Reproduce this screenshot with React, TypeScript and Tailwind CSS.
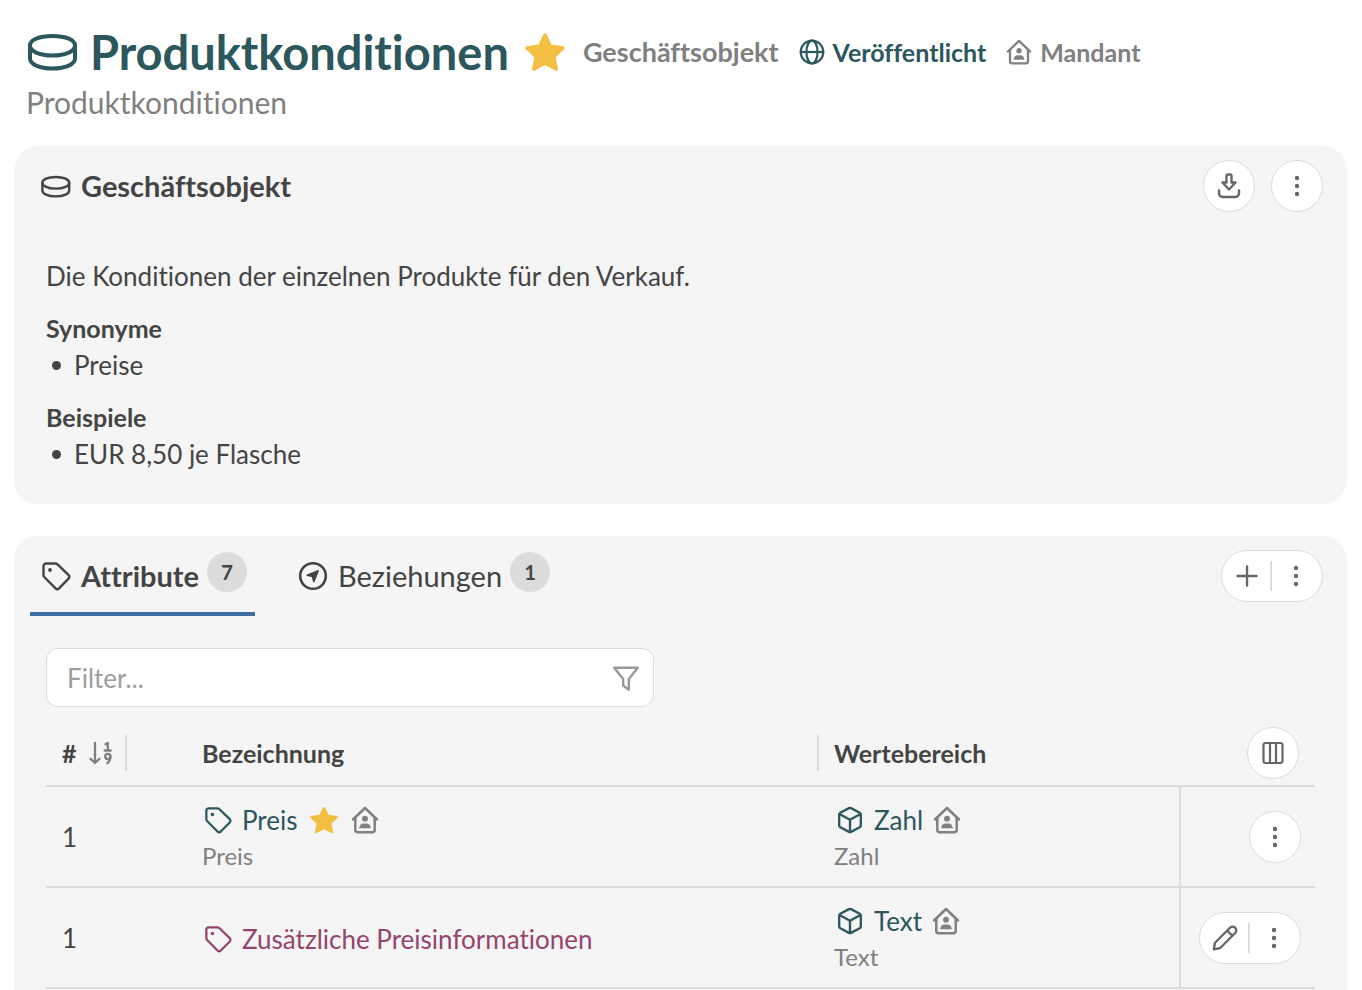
import { ReactNode } from "react";

type IconProps = { className?: string };

interface Reference {
  label: string;
  shared: boolean;
}

interface AttributeRow {
  position: number;
  name: string;
  description?: string;
  isKey: boolean;
  isShared: boolean;
  isDraft: boolean;
  editable: boolean;
  range: Reference;
}

const rows: AttributeRow[] = [
  {
    position: 1,
    name: "Preis",
    description: "Preis",
    isKey: true,
    isShared: true,
    isDraft: false,
    editable: false,
    range: { label: "Zahl", shared: true }
  },
  {
    position: 1,
    name: "Zusätzliche Preisinformationen",
    isKey: false,
    isShared: false,
    isDraft: true,
    editable: true,
    range: { label: "Text", shared: true }
  }
];

const details = [
  { title: "Synonyme", items: ["Preise"] },
  { title: "Beispiele", items: ["EUR 8,50 je Flasche"] }
];

export default function App() {
  return (
    <div className="flex min-h-screen flex-col bg-white pt-6 pr-[15px] pl-[14px] font-['Lato','Noto_Sans',sans-serif] text-[26px] leading-9 text-[#444] [font-variant-ligatures:none]">
      <header className="px-3">
        <div className="flex items-center">
          <DiscIcon className="h-[38px] w-[52px] shrink-0 text-[#2b575d]" />
          <h1 className="ml-3 text-[47px] leading-14 font-bold text-[#2b575d]">Produktkonditionen</h1>
          <StarIcon className="ml-4 h-10 w-10 shrink-0" />
          <span className="ml-[18px] text-[27px] font-bold text-[#808080]">Geschäftsobjekt</span>
          <span className="ml-5 flex items-center gap-2 text-[25px] font-bold text-[#2b575d]">
            <GlobeIcon className="h-[26px] w-[26px]" />
            Veröffentlicht
          </span>
          <span className="ml-5 flex items-center gap-2 text-[25px] font-bold text-[#808080]">
            <HouseIcon className="h-[26px] w-[26px]" />
            Mandant
          </span>
        </div>
        <p className="mt-[2px] text-[30px] leading-10 text-[#808080]">Produktkonditionen</p>
      </header>

      <section className="mt-6 rounded-3xl bg-[#f5f5f5] pb-8">
        <div className="flex h-20 items-center justify-between pr-6 pl-[26px]">
          <h2 className="flex items-center gap-[10px] text-[29px] font-bold">
            <DiscIcon className="h-[23px] w-[31px]" />
            Geschäftsobjekt
          </h2>
          <div className="flex gap-4">
            <RoundButton label="Herunterladen">
              <DownloadIcon className="h-6 w-6" />
            </RoundButton>
            <RoundButton label="Weitere Aktionen">
              <DotsIcon className="h-6 w-6" />
            </RoundButton>
          </div>
        </div>
        <div className="mt-8 px-8">
          <p>Die Konditionen der einzelnen Produkte für den Verkauf.</p>
          {details.map((detail) => (
            <div key={detail.title} className="mt-4">
              <h3 className="text-[25px] leading-9 font-bold">{detail.title}</h3>
              <ul className="pt-px">
                {detail.items.map((item) => (
                  <li key={item} className="flex items-center gap-[13px] pl-[6px]">
                    <span className="h-[9px] w-[9px] rounded-full bg-[#444]" />
                    {item}
                  </li>
                ))}
              </ul>
            </div>
          ))}
        </div>
      </section>

      <section className="mt-8 flex-1 rounded-t-3xl bg-[#f5f5f5]">
        <div className="flex h-20 items-center justify-between pr-6 pl-4">
          <div role="tablist" className="flex gap-8 self-stretch">
            <Tab icon={<TagIcon className="h-[30px] w-[30px]" />} label="Attribute" count={7} active />
            <Tab icon={<CompassIcon className="h-[30px] w-[30px]" />} label="Beziehungen" count={1} />
          </div>
          <ButtonGroup label="Attribut hinzufügen" icon={<PlusIcon className="h-6 w-6" />} />
        </div>

        <div className="px-8 pt-8">
          <div className="flex h-[59px] w-[608px] max-w-full items-center rounded-xl border border-[#dcdcdc] bg-white pr-3 pl-5">
            <input
              aria-label="Filter"
              placeholder="Filter..."
              className="min-w-0 flex-1 bg-transparent outline-none placeholder:text-[#9e9e9e]"
            />
            <FilterIcon className="h-[30px] w-[30px] text-[#999]" />
          </div>

          <table className="mt-[14px] w-full table-fixed text-left">
            <thead>
              <tr className="h-[65px] border-b-2 border-[#dcdcdc] text-[25px]">
                <th className="w-[140px] p-0 font-bold">
                  <span className="flex h-9 w-[81px] items-center gap-3 border-r-2 border-[#dcdcdc] pl-4">
                    #
                    <SortIcon className="h-6 w-6 shrink-0 text-[#808080]" />
                  </span>
                </th>
                <th className="p-0 font-bold">
                  <span className="flex h-9 items-center border-r-2 border-[#dcdcdc] pl-4">Bezeichnung</span>
                </th>
                <th className="w-[361px] p-0 pl-[15px] font-bold">Wertebereich</th>
                <th className="w-[135px] p-0 pr-4">
                  <div className="flex justify-end">
                    <RoundButton label="Spalten">
                      <ColumnsIcon className="h-6 w-6" />
                    </RoundButton>
                  </div>
                </th>
              </tr>
            </thead>
            <tbody>
              {rows.map((row) => (
                <AttributeTableRow key={row.name} row={row} />
              ))}
            </tbody>
          </table>
        </div>
      </section>
    </div>
  );
}

function AttributeTableRow({ row }: { row: AttributeRow }) {
  return (
    <tr className="h-[101px] border-b-2 border-[#dcdcdc]">
      <td className="p-0 pt-px pl-4">{row.position}</td>
      <td className="p-0 pt-[3px] pl-4">
        <div className="flex items-center">
          <a
            href="#"
            className={`flex items-center gap-[10px] pl-[2px] ${row.isDraft ? "text-[#95446d]" : "text-[#2b575d]"}`}
          >
            <TagIcon className="h-7 w-7" />
            {row.name}
          </a>
          {row.isKey ? <StarIcon className="ml-3 h-7 w-7" /> : null}
          {row.isShared ? <HouseIcon className="ml-[13px] h-7 w-7 text-[#808080]" /> : null}
        </div>
        {row.description ? <p className="text-2xl leading-9 text-[#808080]">{row.description}</p> : null}
      </td>
      <td className="border-r-2 border-[#dcdcdc] p-0 pt-[3px] pl-[15px]">
        <div className="flex items-center gap-[10px]">
          <a href="#" className="flex items-center gap-[10px] pl-[2px] text-[#2b575d]">
            <CubeIcon className="h-7 w-7" />
            {row.range.label}
          </a>
          {row.range.shared ? <HouseIcon className="h-7 w-7 text-[#808080]" /> : null}
        </div>
        <p className="text-2xl leading-9 text-[#808080]">{row.range.label}</p>
      </td>
      <td className="p-0 pt-px pr-[14px]">
        <div className="flex justify-end">
          {row.editable ? (
            <ButtonGroup label="Bearbeiten" icon={<PencilIcon className="h-7 w-7" />} />
          ) : (
            <RoundButton label="Weitere Aktionen">
              <DotsIcon className="h-6 w-6" />
            </RoundButton>
          )}
        </div>
      </td>
    </tr>
  );
}

function Tab({ icon, label, count, active }: { icon: ReactNode; label: string; count: number; active?: boolean }) {
  return (
    <button
      type="button"
      role="tab"
      aria-selected={Boolean(active)}
      className={`flex items-center border-b-4 pt-1 pr-2 pl-[11px] text-[29px] ${
        active ? "border-[#3e6fa3] font-bold" : "border-transparent"
      }`}
    >
      {icon}
      <span className="ml-[10px]">{label}</span>
      <span className="mb-2 ml-2 grid h-10 w-10 place-items-center rounded-full bg-[#dcdcdc] text-xl font-bold">
        {count}
      </span>
    </button>
  );
}

function RoundButton({ label, children }: { label: string; children: ReactNode }) {
  return (
    <button
      type="button"
      aria-label={label}
      className="grid h-[52px] w-[52px] place-items-center rounded-full border border-[#dcdcdc] bg-white text-[#666]"
    >
      {children}
    </button>
  );
}

function ButtonGroup({ label, icon }: { label: string; icon: ReactNode }) {
  return (
    <div className="flex h-[52px] w-[102px] items-center rounded-full border border-[#dcdcdc] bg-white text-[#666]">
      <button type="button" aria-label={label} className="grid h-full w-12 place-items-center rounded-l-full pl-[2px]">
        {icon}
      </button>
      <span className="h-[30px] w-[2px] bg-[#dcdcdc]" />
      <button type="button" aria-label="Weitere Aktionen" className="grid h-full w-12 place-items-center rounded-r-full">
        <DotsIcon className="h-6 w-6" />
      </button>
    </div>
  );
}

function DiscIcon({ className }: IconProps) {
  return (
    <svg viewBox="0 0 52 38" className={className} fill="none" stroke="currentColor" strokeWidth="4">
      <path d="M4 12.500C4 7 13 3 26.500 3S49 7 49 12.500 40 22.500 26.500 22.500 4 18 4 12.500z" />
      <path d="M4 12.500v13C4 31 13 35.500 26.500 35.500S49 31 49 25.500v-13" />
    </svg>
  );
}

function StarIcon({ className }: IconProps) {
  return (
    <svg viewBox="0 0 40 40" className={className} fill="#f3bf42">
      <path d="M18.400 2.300a1.800 1.800 0 0 1 3.200 0l4.800 10.300 11.700 1.600c1.700.3 2.300 1.900 1.100 3L30.700 25.200l2.200 11.500c.3 1.700-1.200 2.700-2.600 1.900L20 33.100 9.700 38.600c-1.400.8-2.900-.2-2.600-1.900l2.200-11.500-8.500-8c-1.200-1.100-.6-2.700 1.100-3l11.700-1.600z" />
    </svg>
  );
}

function GlobeIcon({ className }: IconProps) {
  return (
    <svg viewBox="0 0 26 26" className={className} fill="none" stroke="currentColor" strokeWidth="2.200">
      <circle cx="13" cy="13" r="11.300" />
      <ellipse cx="13" cy="13" rx="5.600" ry="11.300" />
      <path d="M2 13h22" />
    </svg>
  );
}

function HouseIcon({ className }: IconProps) {
  return (
    <svg viewBox="0 0 28 28" className={className} fill="none" stroke="currentColor" strokeWidth="2.500" strokeLinecap="round" strokeLinejoin="round">
      <path d="M2 13.500 14 2l12 11.500" />
      <path d="M4.300 11.800V24a2.200 2.200 0 0 0 2.200 2.200h15A2.200 2.200 0 0 0 23.700 24V11.800" />
      <circle cx="14" cy="12.700" r="2.900" fill="currentColor" stroke="none" />
      <path d="M8.200 22.300c0-2.900 2-4.900 4.500-4.900h2.600c2.500 0 4.500 2 4.500 4.900z" fill="currentColor" stroke="none" />
    </svg>
  );
}

function TagIcon({ className }: IconProps) {
  return (
    <svg viewBox="0 0 30 30" className={className} fill="none" stroke="currentColor" strokeWidth="2.400" strokeLinejoin="round">
      <path d="M5 2.500h9.500c.7 0 1.300.3 1.800.7l11.300 10.900c1 1 1 2.500 0 3.500L18 27.300c-1 1-2.500 1-3.500 0L3.300 16c-.5-.5-.8-1.100-.8-1.800V5A2.500 2.500 0 0 1 5 2.500z" />
      <circle cx="9" cy="9" r="1.900" fill="currentColor" stroke="none" />
    </svg>
  );
}

function CompassIcon({ className }: IconProps) {
  return (
    <svg viewBox="0 0 30 30" className={className} fill="none" stroke="currentColor" strokeWidth="2.600">
      <circle cx="15" cy="15" r="12.800" />
      <path d="m20.200 9.800-4.400 11-1.400-5.200-5.200-1.400z" fill="currentColor" strokeWidth="1.500" strokeLinejoin="round" />
    </svg>
  );
}

function CubeIcon({ className }: IconProps) {
  return (
    <svg viewBox="0 0 30 30" className={className} fill="none" stroke="currentColor" strokeWidth="2.500" strokeLinejoin="round">
      <path d="M13.900 2.300a2.300 2.300 0 0 1 2.200 0l9.300 4.900A2.300 2.300 0 0 1 26.600 9.200v11.600a2.300 2.300 0 0 1-1.200 2l-9.300 4.900a2.300 2.300 0 0 1-2.200 0l-9.300-4.900a2.300 2.300 0 0 1-1.200-2V9.200a2.300 2.300 0 0 1 1.200-2z" />
      <path d="m3.800 8.500 11.200 6.200 11.200-6.200M15 14.700v13" />
    </svg>
  );
}

function DownloadIcon({ className }: IconProps) {
  return (
    <svg viewBox="0 0 24 24" className={`${className} overflow-visible`} fill="none" stroke="currentColor" strokeWidth="2.400" strokeLinecap="round" strokeLinejoin="round">
      <path d="M9.500 2a1.500 1.500 0 0 1 1.500-1.500h2A1.500 1.500 0 0 1 14.500 2v6.500h4L12 15.500l-6.500-7h4z" />
      <path d="M2 16.500v2.800a3.700 3.700 0 0 0 3.700 3.700h12.600a3.700 3.700 0 0 0 3.700-3.700v-2.800" />
    </svg>
  );
}

function DotsIcon({ className }: IconProps) {
  return (
    <svg viewBox="0 0 24 24" className={className} fill="currentColor">
      <circle cx="12" cy="4" r="2.200" />
      <circle cx="12" cy="12" r="2.200" />
      <circle cx="12" cy="20" r="2.200" />
    </svg>
  );
}

function PlusIcon({ className }: IconProps) {
  return (
    <svg viewBox="0 0 24 24" className={className} fill="none" stroke="currentColor" strokeWidth="2.400" strokeLinecap="round">
      <path d="M12 2.500v19M2.500 12h19" />
    </svg>
  );
}

function FilterIcon({ className }: IconProps) {
  return (
    <svg viewBox="0 0 30 30" className={className} fill="none" stroke="currentColor" strokeWidth="2.400" strokeLinejoin="round">
      <path d="M3.200 4.800h23.600l-9 11.200v10.700l-5.600-4.200V16z" />
    </svg>
  );
}

function SortIcon({ className }: IconProps) {
  return (
    <svg viewBox="0 0 24 24" className={className} fill="none" stroke="currentColor" strokeWidth="2.300" strokeLinecap="round" strokeLinejoin="round">
      <path d="M6 2v20M1.500 17.800 6 22l4.500-4.200" />
      <path d="M16.500 3.200 18.800 2v7.500M15.700 9.500h6" />
      <circle cx="18.800" cy="15.500" r="2.600" />
      <path d="M21.400 15.700c0 2.800-1.200 4.800-3 6.500" />
    </svg>
  );
}

function ColumnsIcon({ className }: IconProps) {
  return (
    <svg viewBox="0 0 24 24" className={className} fill="none" stroke="currentColor" strokeWidth="2.200">
      <rect x="2.500" y="2" width="19" height="20" rx="2" />
      <path d="M9 2v20M15 2v20" />
    </svg>
  );
}

function PencilIcon({ className }: IconProps) {
  return (
    <svg viewBox="0 0 28 28" className={className} fill="none" stroke="currentColor" strokeWidth="2.300" strokeLinecap="round" strokeLinejoin="round">
      <path d="M2.800 25.300 4 18.800 19 3.800a3.600 3.600 0 0 1 5.200 5.200L9.200 24z" />
      <path d="m16.200 6.600 5.200 5.200" />
    </svg>
  );
}
